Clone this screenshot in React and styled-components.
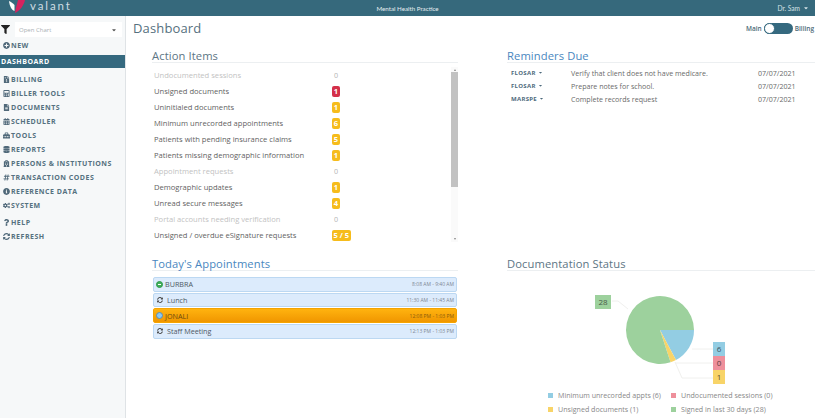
import React from "react";
import styled, { createGlobalStyle } from "styled-components";
import {
  FaFilter, FaPlusCircle, FaFileInvoiceDollar, FaCalculator, FaFileAlt, FaCalendarAlt,
  FaToolbox, FaDatabase, FaHospital, FaHashtag, FaInfoCircle, FaCogs, FaQuestion, FaSyncAlt, FaCaretDown,
} from "react-icons/fa";

const Global = createGlobalStyle`
  html, body { margin: 0; padding: 0; background: #fff; }
  body { font-family: "Open Sans", "Liberation Sans", sans-serif; overflow: hidden; }
  * { box-sizing: border-box; }
`;

const Page = styled.div`
  width: 815px; height: 418px; overflow: hidden; display: flex; flex-direction: column; color: #555;
`;
const Header = styled.header`
  height: 16px; flex: none; background: #36697c; color: #e6eef1;
  display: grid; grid-template-columns: 1fr auto 1fr; align-items: center;
`;
const Brand = styled.div`
  display: flex; align-items: center; gap: 5px; padding-left: 8px; height: 16px; overflow: hidden;
`;
const BrandName = styled.span`
  font-family: "Lato", sans-serif; font-size: 11.5px; letter-spacing: 1.9px; color: #cfdde3; font-weight: 400; line-height: 10px; margin-top: -5px;
`;
const HeaderTitle = styled.div`font-family: "Lato", sans-serif; font-size: 6.2px; color: #e6eef1;`;
const User = styled.div`
  justify-self: end; padding-right: 6px; font-size: 6.6px; display: flex; align-items: center; gap: 3px; color: #d5e2e7;
  font-family: "Lato", sans-serif;
`;
const Body = styled.div`flex: 1; display: flex; min-height: 0;`;
const Sidebar = styled.nav`
  width: 126px; flex: none; background: #f6f8f9; border-right: 1px solid #dfe3e6; padding-top: 6px;
`;
const ChartRow = styled.div`display: flex; align-items: center; height: 15px; gap: 5px; padding-left: 1px; margin-bottom: 1px;`;
const ChartInput = styled.div`
  width: 107px; height: 15px; background: #fff; display: flex; align-items: center; justify-content: space-between;
  padding: 0 5px 0 4px; font-size: 6px; color: #aab0b4;
`;
const NavItem = styled.div`
  display: flex; align-items: center; gap: 1px;
  height: ${p => p.$h || 14}px; padding-left: ${p => p.$active ? 1 : 3}px; margin-top: ${p => p.$mt || 0}px;
  font-weight: 700; font-size: 7px; letter-spacing: .5px; color: ${p => p.$active ? "#fff" : "#55717f"};
  background: ${p => p.$active ? "#35697f" : "transparent"};
  white-space: nowrap;
  svg { flex: none; width: 7px; height: 7px; color: #50697a; }
`;
const Main = styled.main`flex: 1; min-width: 0; display: flex; flex-direction: column;`;
const TopBar = styled.div`
  height: 24px; flex: none; display: flex; align-items: center; justify-content: space-between; padding: 0 1px 0 7px;
`;
const PageTitle = styled.h1`margin: 0; font-weight: 400; font-size: 13px; color: #56707e; letter-spacing: .15px;`;
const Switch = styled.div`display: flex; align-items: center; gap: 2px; font-size: 6.5px; font-weight: 600; color: #4d6a78;`;
const Track = styled.div`width: 29px; height: 11px; border-radius: 6px; background: #35697f; display: flex;`;
const Knob = styled.div`width: 11px; height: 11px; border-radius: 50%; background: #fff; border: 1px solid #35697f;`;
const Grid = styled.div`
  flex: 1; display: grid; grid-template-columns: 355px 308px; padding: 10px 0 0 26px; grid-template-rows: 208px 1fr;
`;
const Section = styled.section`display: flex; flex-direction: column; min-height: 0; padding-right: ${p => p.$pr || 0}px;`;
const SectionHead = styled.h2`
  margin: 0; height: 13px; font-weight: 400; font-size: 11.2px; line-height: 12px; color: ${p => p.$blue ? "#4a87c0" : "#5d7584"};
  border-bottom: 1px solid #eceff1; white-space: nowrap; letter-spacing: .1px;
`;
const ActionWrap = styled.div`display: flex; margin-top: 4px; height: 175px;`;
const ActionList = styled.div`flex: 1; padding-left: 2px;`;
const ActionRow = styled.div`
  height: 16px; display: grid; grid-template-columns: 178px auto; align-items: center;
  font-size: 7.6px; color: ${p => p.$muted ? "#c2c2c2" : "#5f5f5f"};
`;
const Badge = styled.span`
  justify-self: start; min-width: 8px; height: 11px; line-height: 11px; padding: 0 1.5px; border-radius: 2px; text-align: center;
  font-size: 7.5px; font-weight: 700; color: #fff; background: ${p => p.$red ? "#d4304a" : "#f6bc1c"};
`;
const Zero = styled.span`font-size: 7.2px; color: #b5b5b5; padding-left: 2px;`;
const Scroll = styled.div`
  width: 7px; height: 175px; background: #fafafa; display: flex; flex-direction: column; align-items: center; justify-content: space-between;
  padding: 2px 0;
`;
const ScrollArrow = styled.span`
  width: 0; height: 0; flex: none;
  border-left: 1.5px solid transparent; border-right: 1.5px solid transparent;
  ${p => p.$down ? "border-top: 2px solid #888;" : "border-bottom: 2px solid #888;"}
`;
const ScrollThumb = styled.div`width: 7px; height: 115px; margin: 1px 0 auto; background: #c2c2c2;`;
const Reminders = styled.div`padding: 3px 0 0 4px;`;
const ReminderRow = styled.div`
  height: 13px; display: grid; grid-template-columns: 60px 187px auto; align-items: center; font-size: 7.1px; color: #6a6a6a;
`;
const Who = styled.span`
  font-size: 6px; font-weight: 700; color: #4d6a7c; letter-spacing: .3px; display: flex; align-items: center; gap: 2px;
  svg { width: 5px; height: 5px; }
`;
const Appts = styled.div`
  display: flex; flex-direction: column; gap: 1px; padding-top: 6px; flex: 1;
  width: 304px; margin-left: 1px;
`;
const Appt = styled.div`
  height: 14.7px; flex: none; display: flex; align-items: center; justify-content: space-between; padding: 0 2px; border-radius: 2px;
  background: ${p => p.$on ? "linear-gradient(#ffb30f,#f09600)" : "#dcebfc"};
  border: 1px solid ${p => p.$on ? "#f5a400" : "#bcd8f2"};
  font-size: 7.2px; color: ${p => p.$on ? "#6b4a10" : "#4e5a66"};
`;
const ApptName = styled.span`display: flex; align-items: center; gap: 2px;`;
const ApptTime = styled.span`font-size: 5px; color: ${p => p.$on ? "#8a5b0e" : "#7c8793"};`;
const Dot = styled.span`
  width: 7px; height: 7px; border-radius: 50%; flex: none; background: ${p => p.$c}; border: 1.5px solid ${p => p.$b};
  display: flex; align-items: center; justify-content: center;
  &::after { content: ""; width: 3px; height: 1px; background: ${p => p.$mark || "transparent"}; }
`;
const SyncSlot = styled.span`
  display: flex; align-items: center; margin: 0 2px 0 1px; color: #444;
  svg { width: 6px; height: 6px; }
`;
const ChartArea = styled.div`display: flex; flex-direction: column; align-items: flex-start;`;
const PieSvg = styled.svg`display: block; margin-top: 8px; flex: none;`;
const Legend = styled.div`
  display: grid; grid-template-columns: 123px auto; margin: 0 0 0 41px; font-size: 7.1px; color: #888;
`;
const LegendItem = styled.div`display: flex; align-items: center; gap: 5px; height: 14px; white-space: nowrap;`;
const Swatch = styled.span`width: 5px; height: 5px; background: ${p => p.$c}; flex: none;`;

const nav = [
  [FaFileInvoiceDollar, "BILLING"], [FaCalculator, "BILLER TOOLS"], [FaFileAlt, "DOCUMENTS"], [FaCalendarAlt, "SCHEDULER"],
  [FaToolbox, "TOOLS"], [FaDatabase, "REPORTS"], [FaHospital, "PERSONS & INSTITUTIONS"], [FaHashtag, "TRANSACTION CODES"],
  [FaInfoCircle, "REFERENCE DATA"], [FaCogs, "SYSTEM"],
];
const actions = [
  ["Undocumented sessions", "0"], ["Unsigned documents", "1", true], ["Uninitialed documents", "1"],
  ["Minimum unrecorded appointments", "6"], ["Patients with pending insurance claims", "5"],
  ["Patients missing demographic information", "1"], ["Appointment requests", "0"], ["Demographic updates", "1"],
  ["Unread secure messages", "4"], ["Portal accounts needing verification", "0"], ["Unsigned / overdue eSignature requests", "5 / 5"],
];
const reminders = [
  ["FLOSAR", "Verify that client does not have medicare."],
  ["FLOSAR", "Prepare notes for school."],
  ["MARSPE", "Complete records request"],
];
const appts = [
  { name: "BURBRA", time: "8:08 AM - 9:40 AM", dot: "#3fae5a", ring: "#2f9a4c", mark: "#fff" },
  { name: "Lunch", time: "11:30 AM - 11:45 AM" },
  { name: "JONALI", time: "12:08 PM - 1:03 PM", dot: "#8cc8f0", ring: "#5c8db0", on: true },
  { name: "Staff Meeting", time: "12:13 PM - 1:03 PM" },
];

const CX = 153;
const CY = 51;
function polar(r, deg) {
  const a = (deg * Math.PI) / 180;
  return [CX + r * Math.cos(a), CY + r * Math.sin(a)];
}
function slice(a0, a1, c) {
  const [x0, y0] = polar(34, a0);
  const [x1, y1] = polar(34, a1);
  return <path d={`M${CX} ${CY} L${x0} ${y0} A34 34 0 ${a1 - a0 > 180 ? 1 : 0} 1 ${x1} ${y1} Z`} fill={c} />;
}

function Pie() {
  return (
    <PieSvg width="308" height="109" viewBox="0 0 308 109">
      {slice(0, 62, "#93cde3")}
      {slice(62, 72, "#f8d468")}
      {slice(72, 360, "#9dd19d")}
      <g fill="none" stroke="#f0f0ee" strokeWidth="1">
        <path d="M105 22 h6 l10 8" />
        <path d="M185 70 h21" />
        <path d="M168 84 h38" />
        <path d="M168 83 l7 16 h31" />
      </g>
      <rect x="88" y="16" width="16" height="14" fill="#9dd19d" />
      <text x="96" y="26" textAnchor="middle" fontSize="8" fill="#4a5a4a" fontFamily="Open Sans">28</text>
      <rect x="206" y="63" width="12" height="14" fill="#93cde3" />
      <text x="212" y="73" textAnchor="middle" fontSize="8" fill="#3c5560" fontFamily="Open Sans">6</text>
      <rect x="206" y="77" width="12" height="14" fill="#ee8f9b" />
      <text x="212" y="87" textAnchor="middle" fontSize="8" fill="#5a3c40" fontFamily="Open Sans">0</text>
      <rect x="206" y="91" width="12" height="14" fill="#f8d468" />
      <text x="212" y="101" textAnchor="middle" fontSize="8" fill="#5a5030" fontFamily="Open Sans">1</text>
    </PieSvg>
  );
}

function Logo() {
  return (
    <svg width="17" height="16" viewBox="0 0 17 16">
      <path d="M1 1 C3 2 5 3 6.5 5 L6.5 11 C3.5 10 1.5 6 1 1 Z" fill="#fff" />
      <path d="M10 0 L17 0 C16 5 12 11 7 13 C7.5 9 9 4 10 0 Z" fill="#d6235f" />
    </svg>
  );
}

export default function App() {
  const [First, firstLabel] = nav[0];
  return (
    <Page>
      <Global />
      <Header>
        <Brand><Logo /><BrandName>valant</BrandName></Brand>
        <HeaderTitle>Mental Health Practice</HeaderTitle>
        <User>Dr. Sam <FaCaretDown size={6} /></User>
      </Header>
      <Body>
        <Sidebar>
          <ChartRow>
            <FaFilter size={9} color="#222" />
            <ChartInput>Open Chart <FaCaretDown size={6} color="#555" /></ChartInput>
          </ChartRow>
          <NavItem><FaPlusCircle />NEW</NavItem>
          <NavItem $active $h={13} $mt={3}>DASHBOARD</NavItem>
          <NavItem $mt={4}><First />{firstLabel}</NavItem>
          {nav.slice(1).map(([I, t]) => <NavItem key={t}><I />{t}</NavItem>)}
          <NavItem $mt={3}><FaQuestion />HELP</NavItem>
          <NavItem><FaSyncAlt />REFRESH</NavItem>
        </Sidebar>
        <Main>
          <TopBar>
            <PageTitle>Dashboard</PageTitle>
            <Switch>Main<Track><Knob /></Track>Billing</Switch>
          </TopBar>
          <Grid>
            <Section $pr={49}>
              <SectionHead>Action Items</SectionHead>
              <ActionWrap>
                <ActionList>
                  {actions.map(([t, n, red]) => (
                    <ActionRow key={t} $muted={n === "0"}>
                      {t}
                      {n === "0" ? <Zero>0</Zero> : <Badge $red={red}>{n}</Badge>}
                    </ActionRow>
                  ))}
                </ActionList>
                <Scroll>
                  <ScrollArrow />
                  <ScrollThumb />
                  <ScrollArrow $down />
                </Scroll>
              </ActionWrap>
            </Section>
            <Section>
              <SectionHead $blue>Reminders Due</SectionHead>
              <Reminders>
                {reminders.map(([w, t]) => (
                  <ReminderRow key={t}>
                    <Who>{w}<FaCaretDown /></Who>
                    <span>{t}</span>
                    <span>07/07/2021</span>
                  </ReminderRow>
                ))}
              </Reminders>
            </Section>
            <Section $pr={49}>
              <SectionHead $blue>Today's Appointments</SectionHead>
              <Appts>
                {appts.map(a => (
                  <Appt key={a.name} $on={a.on}>
                    <ApptName>
                      {a.dot ? <Dot $c={a.dot} $b={a.ring} $mark={a.mark} /> : <SyncSlot><FaSyncAlt /></SyncSlot>}
                      {a.name}
                    </ApptName>
                    <ApptTime $on={a.on}>{a.time}</ApptTime>
                  </Appt>
                ))}
              </Appts>
            </Section>
            <Section>
              <SectionHead>Documentation Status</SectionHead>
              <ChartArea>
                <Pie />
                <Legend>
                  <LegendItem><Swatch $c="#93cde3" />Minimum unrecorded appts (6)</LegendItem>
                  <LegendItem><Swatch $c="#ee8f9b" />Undocumented sessions (0)</LegendItem>
                  <LegendItem><Swatch $c="#f8d468" />Unsigned documents (1)</LegendItem>
                  <LegendItem><Swatch $c="#9dd19d" />Signed in last 30 days (28)</LegendItem>
                </Legend>
              </ChartArea>
            </Section>
          </Grid>
        </Main>
      </Body>
    </Page>
  );
}
